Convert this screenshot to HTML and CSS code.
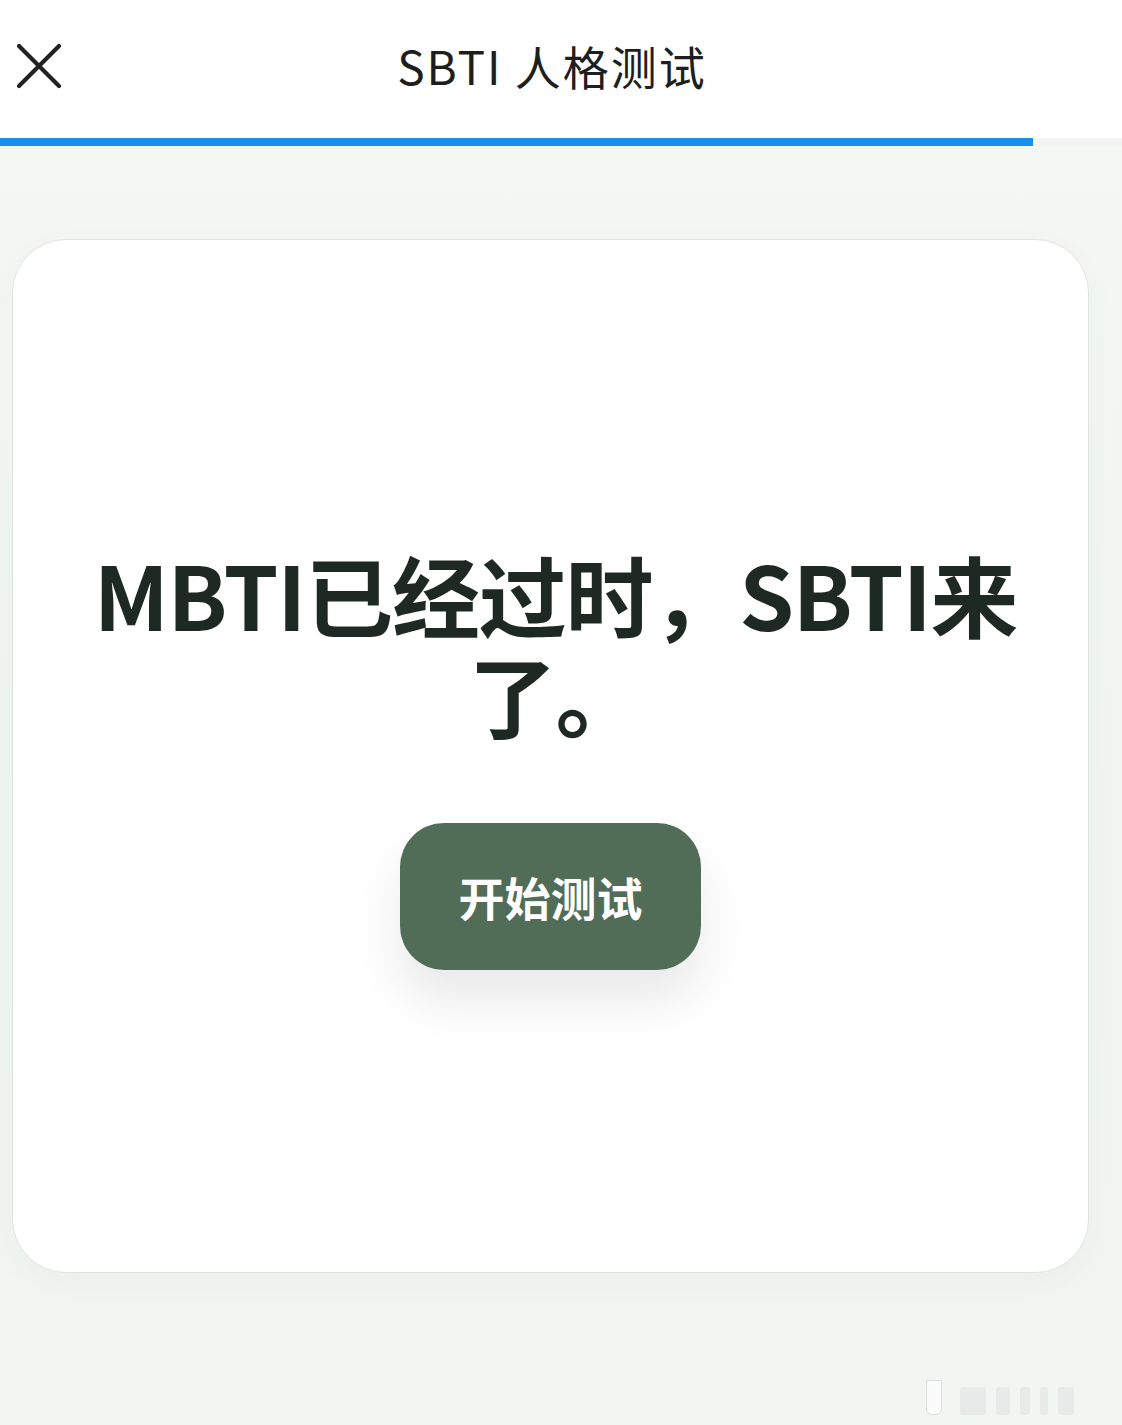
FILE: index.html
```html
<!DOCTYPE html>
<html lang="zh-CN">
<head>
<meta charset="utf-8">
<title>SBTI 人格测试</title>
<link rel="stylesheet" href="styles.css">
</head>
<body>
<header class="topbar">
  <button class="close" aria-label="关闭">
    <svg width="48" height="48" viewBox="0 0 48 48"><path d="M4 4 L44 44 M44 4 L4 44" stroke="#222" stroke-width="4.2" stroke-linecap="round" fill="none"/></svg>
  </button>
  <div class="title">SBTI 人格测试</div>
</header>
<div class="progress"><div class="progress-fill"></div></div>
<main class="page">
  <section class="card">
    <h1 class="headline">MBTI已经过时，SBTI来了。</h1>
    <button class="start">开始测试</button>
  </section>
</main>
<div class="gesture">
  <span class="g g1"></span><span class="g g2"></span><span class="g g3"></span><span class="g g4"></span><span class="g g5"></span><span class="g g6"></span>
</div>
</body>
</html>
```
FILE: styles.css
```css
html, body {
  margin: 0;
  padding: 0;
}
body {
  width: 1122px;
  height: 1425px;
  overflow: hidden;
  background: linear-gradient(180deg, #f4f8f5 0%, #f0f5f2 60%, #f2f6f3 100%);
  font-family: "Noto Sans CJK SC", "Noto Sans", sans-serif;
  position: relative;
}
.topbar {
  height: 138px;
  background: #ffffff;
  display: flex;
  align-items: center;
  justify-content: center;
  position: relative;
}
.close {
  position: absolute;
  left: 15px;
  top: 42px;
  width: 48px;
  height: 48px;
  padding: 0;
  border: 0;
  background: none;
}
.title {
  font-family: "Noto Sans CJK SC", sans-serif;
  font-size: 46px;
  font-weight: 400;
  color: #1e1e1e;
  letter-spacing: 2px;
  margin-right: 18px;
  margin-bottom: 8px;
}
.progress {
  height: 8px;
  background: #f2f4f4;
}
.progress-fill {
  width: 1033px;
  height: 8px;
  background: #1a8fea;
}
.page {
  padding: 93px 33px 0 12px;
}
.card {
  height: 1032px;
  background: #ffffff;
  border: 1px solid #dfe5e1;
  border-radius: 54px;
  display: flex;
  flex-direction: column;
  align-items: center;
  justify-content: center;
  box-shadow: 0 10px 30px rgba(40, 70, 50, 0.04);
}
.headline {
  margin: 0 40px;
  text-align: center;
  font-family: "Noto Sans CJK SC", sans-serif;
  font-size: 88px;
  font-weight: 700;
  line-height: 100px;
  color: #1f2924;
  letter-spacing: -1.2px;
  padding-left: 10px;
}
.start {
  margin-top: 80px;
  width: 301px;
  height: 147px;
  border: 0;
  border-radius: 44px;
  background: #516c57;
  color: #ffffff;
  font-family: "Noto Sans CJK SC", sans-serif;
  font-size: 46px;
  font-weight: 700;
  box-shadow: 0 30px 50px rgba(0, 0, 0, 0.09);
}
.gesture {
  position: absolute;
  left: 926px;
  top: 1380px;
  display: flex;
  gap: 10px;
  align-items: flex-end;
}
.g {
  display: block;
  height: 28px;
  border-radius: 3px;
  background: #e8eaea;
}
.g1 { width: 14px; background: #fbfbfb; border: 1px solid #dcdede; height: 33px; border-radius: 0 0 6px 6px; margin-right: 8px; }
.g2 { width: 26px; }
.g3 { width: 14px; }
.g4 { width: 10px; }
.g5 { width: 8px; }
.g6 { width: 16px; }
```
